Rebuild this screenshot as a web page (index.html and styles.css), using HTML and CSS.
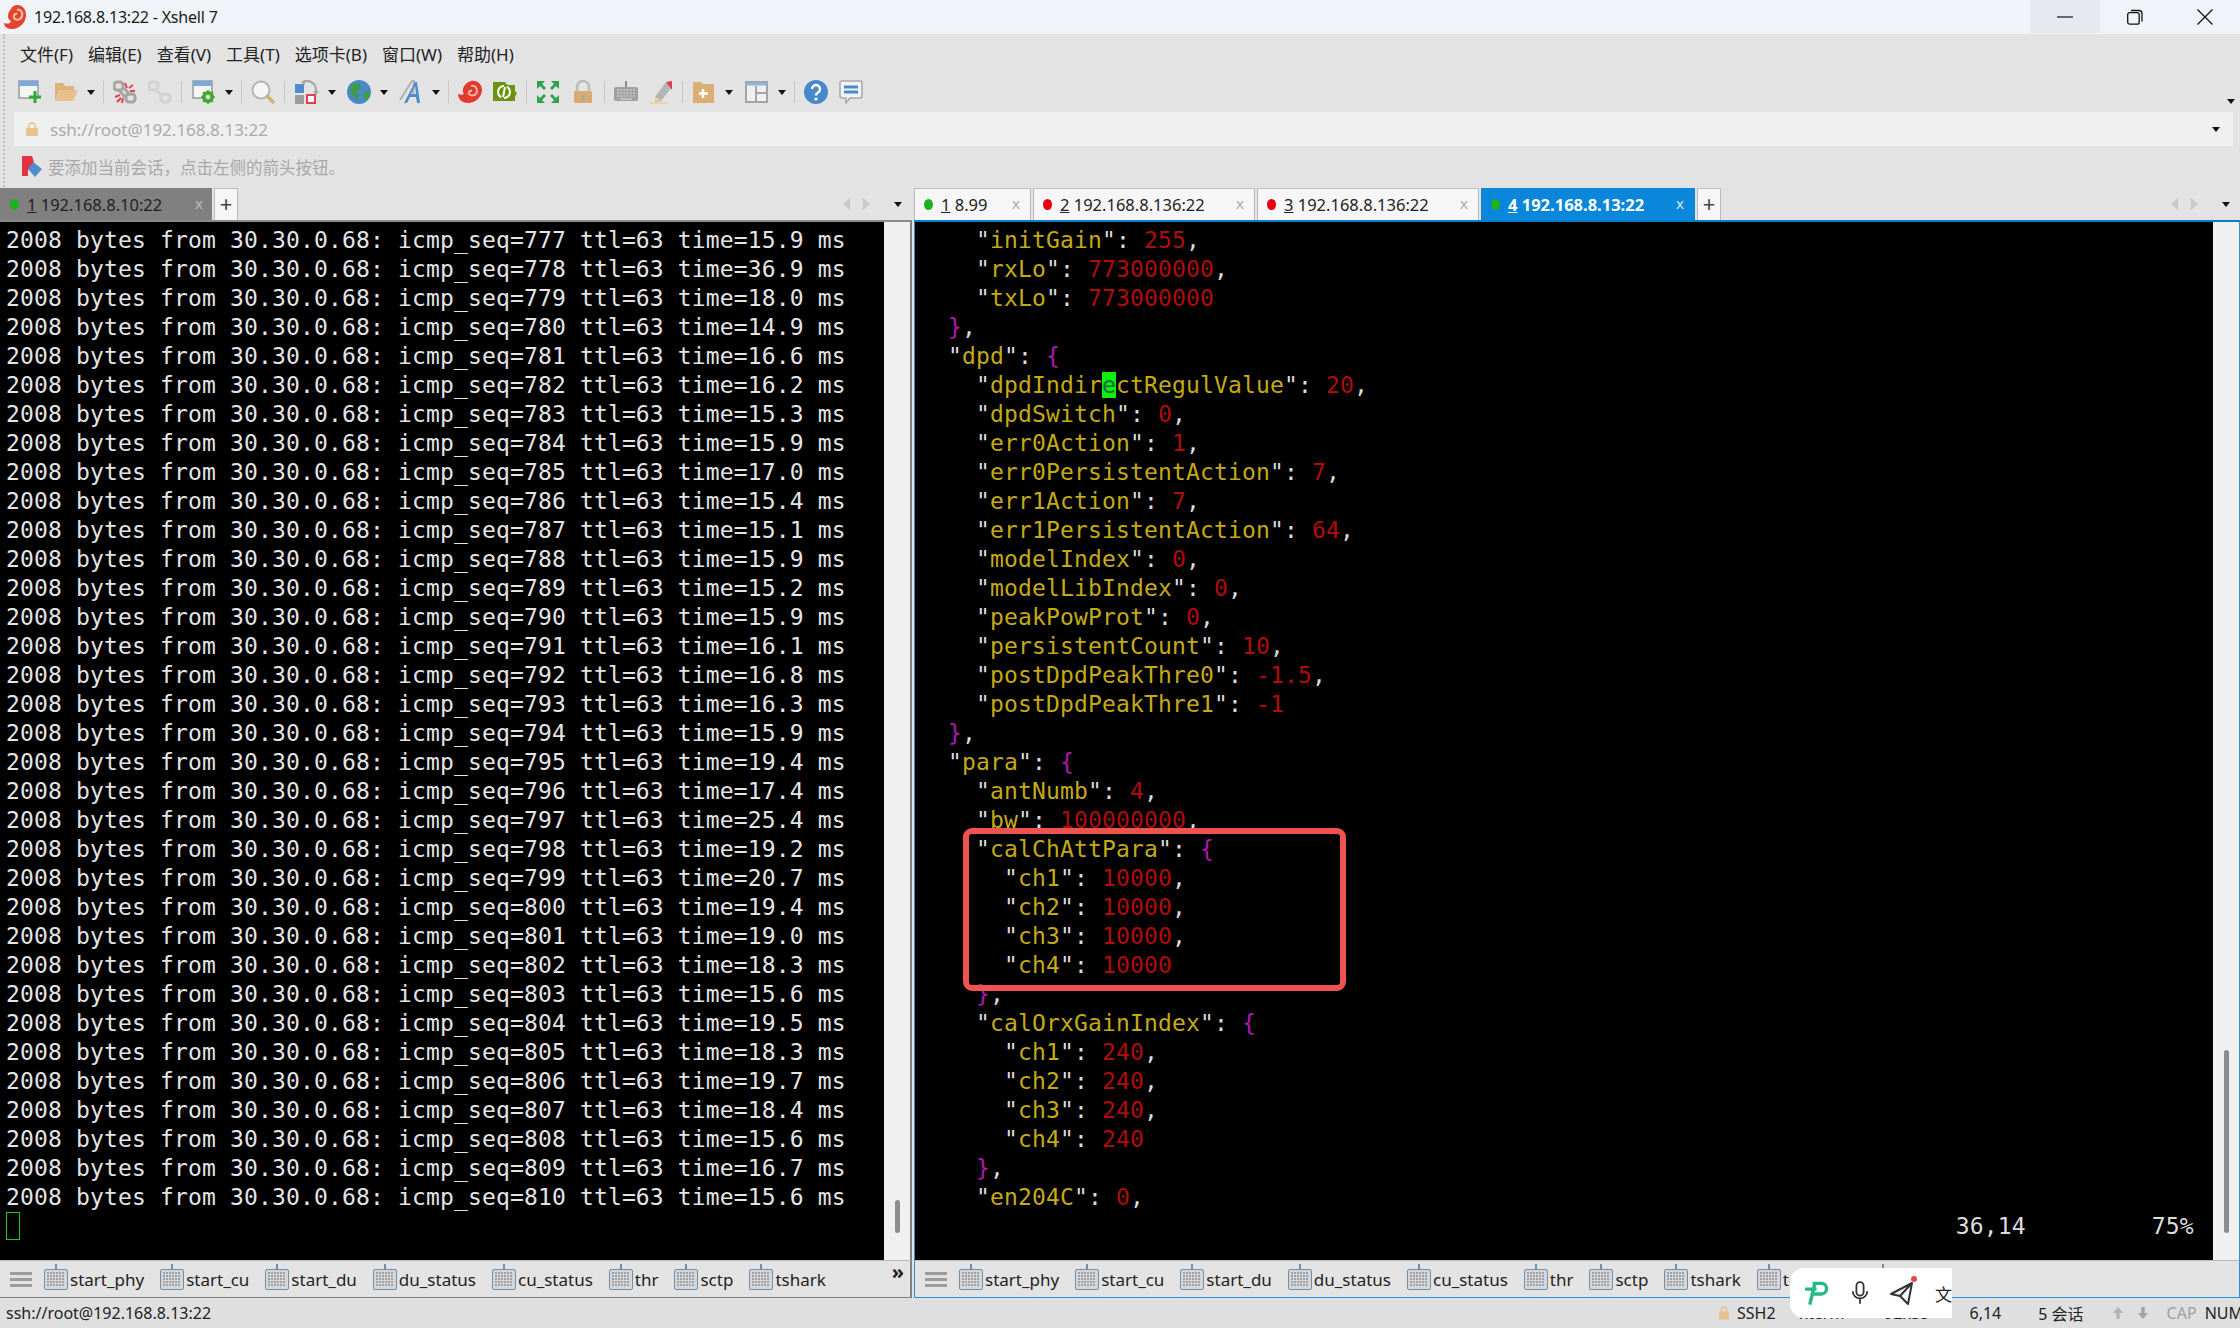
FILE: index.html
```html
<!DOCTYPE html>
<html lang="zh">
<head>
<meta charset="utf-8">
<title>192.168.8.13:22 - Xshell 7</title>
<link rel="stylesheet" href="styles.css">
</head>
<body>
<svg class="defs" aria-hidden="true">
  <symbol id="kb" viewBox="0 0 24 26">
    <path d="M11 0h2v6h-2z" fill="#6f8fb0"/>
    <rect x=".5" y="5.500" width="23" height="20" rx="1.500" fill="#d4d6d8" stroke="#6f8fb0"/>
    <path d="M3 9h18M3 12h18M3 15h18M3 18h18M3 21h18" stroke="#8d8f91" stroke-width="1.500" stroke-dasharray="2 1"/>
  </symbol>
</svg>
<div class="app">
  <header class="titlebar">
    <svg class="logo" viewBox="0 0 24 26"><path d="M14 1c6 0 9 5 9 10 0 8-7 14-14 14-4 0-8-2-8-6 3 1 6 1 7-2-4-1-4-8 0-12 1-3 4-4 6-4z" fill="#e4452f"/><path d="M14 6c4-1 6 3 5 6-1 4-6 5-8 2-1-2 1-5 3-4" fill="none" stroke="#f8c7a8" stroke-width="2"/></svg>
    <span class="title">192.168.8.13:22 - Xshell 7</span>
    <div class="winbtns">
      <span class="winbtn hover"><svg viewBox="0 0 16 16"><path d="M0 8h16" stroke="#111" stroke-width="1.200"/></svg></span>
      <span class="winbtn"><svg viewBox="0 0 16 16"><rect x=".7" y="3.700" width="11.500" height="11.500" rx="2" fill="none" stroke="#111" stroke-width="1.300"/><path d="M4 1.500h8a3 3 0 0 1 3 3v8" fill="none" stroke="#111" stroke-width="1.300"/></svg></span>
      <span class="winbtn"><svg viewBox="0 0 16 16"><path d="M.5.500l15 15M15.500.500l-15 15" stroke="#111" stroke-width="1.300"/></svg></span>
    </div>
  </header>

  <div class="chrome">
    <nav class="menubar">
      <span>文件(F)</span><span>编辑(E)</span><span>查看(V)</span><span>工具(T)</span><span>选项卡(B)</span><span>窗口(W)</span><span>帮助(H)</span>
    </nav>

    <div class="toolbar">
      <svg class="ti" viewBox="0 0 24 24"><rect x="1" y="1" width="19" height="17" fill="#f4f4f4" stroke="#9a9a9a" stroke-width="1.500"/><rect x="1" y="1" width="19" height="5" fill="#7ba9dc"/><path d="M17 11v12M11 17h12" stroke="#2faa3a" stroke-width="3"/></svg>
      <svg class="ti n1" viewBox="0 0 24 24"><path d="M1 3h8l2 3h9v4H5L1 21z" fill="#dcb27a"/><path d="M5 10h19l-5 11H1z" fill="#e8c08a"/></svg>
      <span class="ca"></span><span class="sep"></span>
      <svg class="ti" viewBox="0 0 24 24"><g fill="none" stroke="#a4a4a4" stroke-width="3"><rect x="1" y="2" width="9" height="8" rx="3"/><rect x="13" y="14" width="9" height="8" rx="3"/><path d="M6 10l6 7M11 8l6 7"/></g><path d="M12 3l2 5M20 5l-4 3M22 11h-5M2 17l5-2M4 22l4-4M9 23l1-5" stroke="#e2404a" stroke-width="2"/></svg>
      <svg class="ti" viewBox="0 0 24 24"><g fill="none" stroke="#d2d2d2" stroke-width="3"><rect x="1" y="2" width="9" height="8" rx="3"/><rect x="13" y="14" width="9" height="8" rx="3"/><path d="M7 9l8 8"/></g></svg>
      <span class="sep"></span>
      <svg class="ti n1" viewBox="0 0 24 24"><rect x="1" y="1" width="19" height="17" fill="#f4f4f4" stroke="#9a9a9a" stroke-width="1.500"/><rect x="1" y="1" width="19" height="5" fill="#7ba9dc"/><circle cx="16" cy="17" r="4.500" fill="none" stroke="#3fa52f" stroke-width="3"/><path d="M16 10v14M9 17h14M11 12l10 10M21 12L11 22" stroke="#3fa52f" stroke-width="1.500"/><circle cx="16" cy="17" r="2" fill="#f4f4f4"/></svg>
      <span class="ca"></span><span class="sep"></span>
      <svg class="ti" viewBox="0 0 24 24"><circle cx="10" cy="10" r="8.500" fill="#f5f5f5" stroke="#b4b4b4" stroke-width="2"/><path d="M16 16l7 7" stroke="#d8ae78" stroke-width="3.500"/></svg>
      <span class="sep"></span>
      <svg class="ti n1" viewBox="0 0 24 24"><rect x="0" y="4" width="9" height="9" fill="#4f8bcd"/><rect x="0" y="15" width="9" height="9" fill="#9c9c9c"/><rect x="12" y="15" width="8" height="8" fill="#fff" stroke="#e0404a" stroke-width="2"/><path d="M8 2a9 9 0 0 1 13 9" fill="none" stroke="#a4a4a4" stroke-width="2"/><path d="M18 11h6l-3 4zM10 0v5L6 2z" fill="#a4a4a4"/></svg>
      <span class="ca"></span>
      <svg class="ti" viewBox="0 0 24 24"><circle cx="12" cy="12" r="12" fill="#4a88cc"/><path d="M6 3l7 1 1 5-4 2 2 5-3 5-2-5-4-3 1-6zM16 12l6-1 1 5-5 5-2-3z" fill="#3f9a4a"/></svg>
      <span class="ca"></span>
      <svg class="ti" viewBox="0 0 24 24"><path d="M1 20L13 1h2l-1 15" fill="none" stroke="#b0b0b0" stroke-width="2"/><path d="M5 23h3l3-6h6l1 6h3L18 2h-2zM12 14l4-8 1 8z" fill="#4f8bcd"/></svg>
      <span class="ca"></span><span class="sep"></span>
      <svg class="ti" viewBox="0 0 24 24"><path d="M10 23C4 23 0 19 0 14c3 1 4 1 6 0C3 10 6 3 13 1c6-1 11 3 11 9 0 7-7 13-14 13z" fill="#e5392e"/><path d="M13 6c4-1 6 2 6 5 0 4-5 6-8 3-1-2 1-4 3-3" fill="none" stroke="#f7b7a8" stroke-width="2"/></svg>
      <svg class="ti" viewBox="0 0 24 24"><path d="M0 2h12l2 3h8v6l2 2-2 4v4H0z" fill="#6d9411"/><circle cx="11" cy="12" r="6" fill="none" stroke="#fff" stroke-width="2"/><path d="M13 4L9 20" stroke="#6d9411" stroke-width="3"/><path d="M12 7l-2 10" stroke="#fff" stroke-width="2"/></svg>
      <span class="sep"></span>
      <svg class="ti" viewBox="0 0 24 24"><path d="M1 1h8L6 4l4 4-2 2-4-4-3 3zM23 1v8l-3-3-4 4-2-2 4-4-3-3zM1 23v-8l3 3 4-4 2 2-4 4 3 3zM23 23h-8l3-3-4-4 2-2 4 4 3-3z" fill="#2fa24a"/></svg>
      <svg class="ti" viewBox="0 0 24 24"><path d="M6 11V7a6 6 0 0 1 12 0v4" fill="none" stroke="#bcbcbc" stroke-width="2.500"/><rect x="3" y="11" width="18" height="12" rx="1.500" fill="#d8ac70"/><rect x="10.500" y="14" width="3" height="6" fill="#a8a8a8"/></svg>
      <span class="sep"></span>
      <svg class="ti" viewBox="0 0 24 24"><path d="M11 1h2v6h-2z" fill="#8d8d8d"/><rect x="0" y="7" width="24" height="14" rx="2" fill="#a0a0a0"/><path d="M3 10h18M3 13h18M3 16h18" stroke="#e0e0e0" stroke-dasharray="2 1.200"/><path d="M6 19h12" stroke="#e0e0e0"/></svg>
      <svg class="ti" viewBox="0 0 24 24"><path d="M6 17L17 2l6 5-11 14-6 1z" fill="#b4b4b4"/><path d="M17 2l6-1v9z" fill="#e0404a"/><path d="M6 17l6 3-7 1z" fill="#f2d6a6"/><path d="M1 23h18" stroke="#f0d4a4" stroke-width="2"/></svg>
      <span class="sep"></span>
      <svg class="ti" viewBox="0 0 24 24"><path d="M1 2h8l2 2h11v19H1z" fill="#dbae74"/><path d="M11 9v9M7 13.500h9" stroke="#fff" stroke-width="2.500"/></svg>
      <span class="ca"></span>
      <svg class="ti n1" viewBox="0 0 24 24"><rect x="1" y="2" width="21" height="20" fill="#f0f0f0" stroke="#a4a4a4" stroke-width="2"/><path d="M1 4h21" stroke="#8fb6e0" stroke-width="3"/><path d="M11 6v16M11 13h11" stroke="#a4a4a4" stroke-width="2"/></svg>
      <span class="ca"></span><span class="sep"></span>
      <svg class="ti" viewBox="0 0 24 24"><circle cx="12" cy="12" r="12" fill="#4a88cc"/><path d="M8 9a4 4 0 1 1 6 3.500c-1.500 1-2 1.500-2 3" fill="none" stroke="#fff" stroke-width="2.500"/><circle cx="12" cy="19" r="1.600" fill="#fff"/></svg>
      <svg class="ti" viewBox="0 0 24 24"><path d="M3 1h18a2 2 0 0 1 2 2v13a2 2 0 0 1-2 2H11l-4 5v-5H3a2 2 0 0 1-2-2V3a2 2 0 0 1 2-2z" fill="#f2f2f2" stroke="#a8a8a8" stroke-width="1.500"/><path d="M5 7h14M5 12h14" stroke="#4a88cc" stroke-width="3"/></svg>
      <span class="ca end"></span>
    </div>

    <div class="addrbar">
      <svg class="lock" viewBox="0 0 12 14"><path d="M3 6V4a3 3 0 0 1 6 0v2" fill="none" stroke="#e6c492" stroke-width="1.500"/><rect y="6" width="12" height="8" rx="1" fill="#e6c492"/></svg>
      <span class="addr">ssh://root@192.168.8.13:22</span>
      <span class="ca dark"></span>
    </div>

    <div class="linkbar">
      <svg class="bookmark" viewBox="0 0 20 22"><path d="M0 0h10l2 6-6 8v6l-6-0z" fill="#e0343f"/><path d="M11 6l9 7-7 8-7-8z" fill="#4f8bcd"/></svg>
      <span>要添加当前会话，点击左侧的箭头按钮。</span>
    </div>
  </div>

  <main class="panes">
    <section class="pane left">
      <div class="tabs">
        <div class="tab current-left"><i class="dot green"></i><span class="tabtext"><u>1</u> 192.168.8.10:22</span><em class="x">x</em></div>
        <span class="plus">+</span>
        <span class="nav"><i class="arr l"></i><i class="arr r"></i><i class="ca dark"></i></span>
      </div>
      <div class="body">
<pre class="term">2008 bytes from 30.30.0.68: icmp_seq=777 ttl=63 time=15.9 ms
2008 bytes from 30.30.0.68: icmp_seq=778 ttl=63 time=36.9 ms
2008 bytes from 30.30.0.68: icmp_seq=779 ttl=63 time=18.0 ms
2008 bytes from 30.30.0.68: icmp_seq=780 ttl=63 time=14.9 ms
2008 bytes from 30.30.0.68: icmp_seq=781 ttl=63 time=16.6 ms
2008 bytes from 30.30.0.68: icmp_seq=782 ttl=63 time=16.2 ms
2008 bytes from 30.30.0.68: icmp_seq=783 ttl=63 time=15.3 ms
2008 bytes from 30.30.0.68: icmp_seq=784 ttl=63 time=15.9 ms
2008 bytes from 30.30.0.68: icmp_seq=785 ttl=63 time=17.0 ms
2008 bytes from 30.30.0.68: icmp_seq=786 ttl=63 time=15.4 ms
2008 bytes from 30.30.0.68: icmp_seq=787 ttl=63 time=15.1 ms
2008 bytes from 30.30.0.68: icmp_seq=788 ttl=63 time=15.9 ms
2008 bytes from 30.30.0.68: icmp_seq=789 ttl=63 time=15.2 ms
2008 bytes from 30.30.0.68: icmp_seq=790 ttl=63 time=15.9 ms
2008 bytes from 30.30.0.68: icmp_seq=791 ttl=63 time=16.1 ms
2008 bytes from 30.30.0.68: icmp_seq=792 ttl=63 time=16.8 ms
2008 bytes from 30.30.0.68: icmp_seq=793 ttl=63 time=16.3 ms
2008 bytes from 30.30.0.68: icmp_seq=794 ttl=63 time=15.9 ms
2008 bytes from 30.30.0.68: icmp_seq=795 ttl=63 time=19.4 ms
2008 bytes from 30.30.0.68: icmp_seq=796 ttl=63 time=17.4 ms
2008 bytes from 30.30.0.68: icmp_seq=797 ttl=63 time=25.4 ms
2008 bytes from 30.30.0.68: icmp_seq=798 ttl=63 time=19.2 ms
2008 bytes from 30.30.0.68: icmp_seq=799 ttl=63 time=20.7 ms
2008 bytes from 30.30.0.68: icmp_seq=800 ttl=63 time=19.4 ms
2008 bytes from 30.30.0.68: icmp_seq=801 ttl=63 time=19.0 ms
2008 bytes from 30.30.0.68: icmp_seq=802 ttl=63 time=18.3 ms
2008 bytes from 30.30.0.68: icmp_seq=803 ttl=63 time=15.6 ms
2008 bytes from 30.30.0.68: icmp_seq=804 ttl=63 time=19.5 ms
2008 bytes from 30.30.0.68: icmp_seq=805 ttl=63 time=18.3 ms
2008 bytes from 30.30.0.68: icmp_seq=806 ttl=63 time=19.7 ms
2008 bytes from 30.30.0.68: icmp_seq=807 ttl=63 time=18.4 ms
2008 bytes from 30.30.0.68: icmp_seq=808 ttl=63 time=15.6 ms
2008 bytes from 30.30.0.68: icmp_seq=809 ttl=63 time=16.7 ms
2008 bytes from 30.30.0.68: icmp_seq=810 ttl=63 time=15.6 ms
<span class="hollow"> </span></pre>
        <div class="scroll"><i class="thumb"></i></div>
      </div>
      <div class="bm">
        <i class="burger"></i>
        <span class="bi"><svg><use href="#kb"/></svg>start_phy</span>
        <span class="bi"><svg><use href="#kb"/></svg>start_cu</span>
        <span class="bi"><svg><use href="#kb"/></svg>start_du</span>
        <span class="bi"><svg><use href="#kb"/></svg>du_status</span>
        <span class="bi"><svg><use href="#kb"/></svg>cu_status</span>
        <span class="bi"><svg><use href="#kb"/></svg>thr</span>
        <span class="bi"><svg><use href="#kb"/></svg>sctp</span>
        <span class="bi"><svg><use href="#kb"/></svg>tshark</span>
        <b class="more">»</b>
      </div>
    </section>

    <section class="pane right">
      <div class="tabs">
        <div class="tab t1"><i class="dot green"></i><span class="tabtext"><u>1</u> 8.99</span><em class="x">x</em></div>
        <div class="tab t2"><i class="dot red"></i><span class="tabtext"><u>2</u> 192.168.8.136:22</span><em class="x">x</em></div>
        <div class="tab t2"><i class="dot red"></i><span class="tabtext"><u>3</u> 192.168.8.136:22</span><em class="x">x</em></div>
        <div class="tab t4 active"><i class="dot green"></i><span class="tabtext"><u>4</u> 192.168.8.13:22</span><em class="x">x</em></div>
        <span class="plus">+</span>
        <span class="nav"><i class="arr l"></i><i class="arr r"></i><i class="ca dark"></i></span>
      </div>
      <div class="body">
<pre class="term">    "<span class="k">initGain</span>": <span class="n">255</span>,
    "<span class="k">rxLo</span>": <span class="n">773000000</span>,
    "<span class="k">txLo</span>": <span class="n">773000000</span>
  <span class="b">}</span>,
  "<span class="k">dpd</span>": <span class="b">{</span>
    "<span class="k">dpdIndir</span><span class="cur">e</span><span class="k">ctRegulValue</span>": <span class="n">20</span>,
    "<span class="k">dpdSwitch</span>": <span class="n">0</span>,
    "<span class="k">err0Action</span>": <span class="n">1</span>,
    "<span class="k">err0PersistentAction</span>": <span class="n">7</span>,
    "<span class="k">err1Action</span>": <span class="n">7</span>,
    "<span class="k">err1PersistentAction</span>": <span class="n">64</span>,
    "<span class="k">modelIndex</span>": <span class="n">0</span>,
    "<span class="k">modelLibIndex</span>": <span class="n">0</span>,
    "<span class="k">peakPowProt</span>": <span class="n">0</span>,
    "<span class="k">persistentCount</span>": <span class="n">10</span>,
    "<span class="k">postDpdPeakThre0</span>": <span class="n">-1.5</span>,
    "<span class="k">postDpdPeakThre1</span>": <span class="n">-1</span>
  <span class="b">}</span>,
  "<span class="k">para</span>": <span class="b">{</span>
    "<span class="k">antNumb</span>": <span class="n">4</span>,
    "<span class="k">bw</span>": <span class="n">100000000</span>,
    "<span class="k">calChAttPara</span>": <span class="b">{</span>
      "<span class="k">ch1</span>": <span class="n">10000</span>,
      "<span class="k">ch2</span>": <span class="n">10000</span>,
      "<span class="k">ch3</span>": <span class="n">10000</span>,
      "<span class="k">ch4</span>": <span class="n">10000</span>
    <span class="b">}</span>,
    "<span class="k">calOrxGainIndex</span>": <span class="b">{</span>
      "<span class="k">ch1</span>": <span class="n">240</span>,
      "<span class="k">ch2</span>": <span class="n">240</span>,
      "<span class="k">ch3</span>": <span class="n">240</span>,
      "<span class="k">ch4</span>": <span class="n">240</span>
    <span class="b">}</span>,
    "<span class="k">en204C</span>": <span class="n">0</span>,
                                                                          36,14         75%</pre>
        <div class="redbox"></div>
        <div class="scroll"><i class="thumb tall"></i></div>
      </div>
      <div class="bm">
        <i class="burger"></i>
        <span class="bi"><svg><use href="#kb"/></svg>start_phy</span>
        <span class="bi"><svg><use href="#kb"/></svg>start_cu</span>
        <span class="bi"><svg><use href="#kb"/></svg>start_du</span>
        <span class="bi"><svg><use href="#kb"/></svg>du_status</span>
        <span class="bi"><svg><use href="#kb"/></svg>cu_status</span>
        <span class="bi"><svg><use href="#kb"/></svg>thr</span>
        <span class="bi"><svg><use href="#kb"/></svg>sctp</span>
        <span class="bi"><svg><use href="#kb"/></svg>tshark</span>
        <span class="bi"><svg><use href="#kb"/></svg>tcpdump</span>
        <span class="bi"><svg><use href="#kb"/></svg>nr抓包</span>
      </div>
    </section>
  </main>

  <footer class="status">
    <span class="s-path">ssh://root@192.168.8.13:22</span>
    <svg class="s-lock" viewBox="0 0 12 16"><path d="M3 6V4a3 3 0 0 1 6 0v2" fill="none" stroke="#e6c492" stroke-width="2"/><rect y="6" width="12" height="10" rx="1" fill="#e6c492"/></svg>
    <span class="s-ssh">SSH2</span>
    <span class="s-term">xterm</span>
    <span class="s-size">92x35</span>
    <span class="s-pos">6,14</span>
    <span class="s-sess">5 会话</span>
    <svg class="s-arrow" viewBox="0 0 14 14"><path d="M7 0l6 7H9v7H5V7H1z" fill="#b4b4b4"/></svg>
    <svg class="s-arrow" viewBox="0 0 14 14"><path d="M7 14l6-7H9V0H5v7H1z" fill="#a4a4a4"/></svg>
    <span class="s-cap">CAP</span>
    <span class="s-num">NUM</span>
  </footer>

  <aside class="imebar">
    <svg viewBox="0 0 26 26" class="ime-p"><path d="M9 3h9a5 5 0 0 1 0 11H8" fill="none" stroke="#22bb86" stroke-width="3.500"/><path d="M11 4L6 25M1 9h12" stroke="#22bb86" stroke-width="3.500" fill="none"/></svg>
    <svg viewBox="0 0 20 26" class="ime-i"><rect x="6" y="1" width="8" height="15" rx="4" fill="none" stroke="#333" stroke-width="2"/><path d="M2 11a8 8 0 0 0 16 0M10 19v6" fill="none" stroke="#333" stroke-width="2"/></svg>
    <span class="ime-send"><svg viewBox="0 0 26 26" class="ime-i2"><path d="M2 14L23 3l-4 21-8-8zM11 16l12-13" fill="none" stroke="#333" stroke-width="2" stroke-linejoin="round"/></svg><i class="ime-dot"></i></span>
    <span class="ime-tr">文A</span>
  </aside>
</div>
</body>
</html>
```
FILE: styles.css
```css
* { box-sizing: border-box; }
html, body { margin: 0; padding: 0; background: #e3e3e3; }
body { font-family: "Noto Sans", "Noto Sans CJK SC", sans-serif; overflow: hidden; }
.defs { position: absolute; width: 0; height: 0; }
i, em, u { font-style: normal; }
.app { position: relative; width: 2240px; height: 1328px; display: flex; flex-direction: column; overflow: hidden; }

/* title bar */
.titlebar { height: 34px; background: #f0f4f8; display: flex; align-items: center; padding-left: 3px; flex: none; }
.logo { width: 24px; height: 26px; margin-right: 7px; }
.title { font-size: 16px; color: #1a1a1a; letter-spacing: -.2px; }
.winbtns { margin-left: auto; display: flex; height: 33px; align-self: flex-start; }
.winbtn { width: 70px; display: flex; align-items: center; justify-content: center; }
.winbtn svg { width: 16px; height: 16px; }
.winbtn.hover { background: #e6eaee; }

/* chrome */
.chrome { flex: none; height: 153px; display: flex; flex-direction: column; background: #e3e3e3; position: relative; }
.chrome::before { content: ""; position: absolute; left: 3px; top: 0; bottom: 0; border-left: 2px dotted #bdbdbd; }
.menubar { height: 38px; display: flex; align-items: center; padding-left: 20px; gap: 15px; font-size: 17px; color: #222; flex: none; }
.toolbar { height: 40px; display: flex; align-items: center; padding-left: 18px; flex: none; }
.ti { width: 24px; height: 24px; margin-right: 9px; flex: none; }
.ti + .ti { margin-left: 2px; }
.ca + .ti { margin-left: 3px; }
.ti.n1 { margin-left: 3px; }
.sep + .ti.n1 { margin-left: 1px; }
.ca + .ti.n1 { margin-left: 4px; }
.ca { width: 0; height: 0; border-left: 4.500px solid transparent; border-right: 4.500px solid transparent; border-top: 5px solid #111; margin-right: 8px; flex: none; display: block; }
.sep { width: 1px; height: 22px; background: #c6c6c6; margin-right: 9px; flex: none; }
.ca.end { margin-left: auto; margin-right: 5px; align-self: flex-end; margin-bottom: 8px; }
.addrbar { height: 34px; margin: 0 7px 0 14px; background: #efefef; display: flex; align-items: center; padding-left: 12px; flex: none; }
.lock { width: 12px; height: 14px; margin-right: 12px; }
.addr { font-size: 17px; color: #aaa; }
.ca.dark { margin: 0 13px 0 auto; }
.linkbar { height: 41px; display: flex; align-items: center; padding-left: 22px; font-size: 16.500px; color: #a8a8a8; flex: none; }
.bookmark { width: 20px; height: 22px; margin-right: 6px; }

/* panes */
.panes { flex: none; height: 1111px; display: flex; gap: 2px; }
.pane { display: flex; flex-direction: column; position: relative; }
.pane.left { width: 912px; }
.pane.right { width: 1326px; }
.tabs { height: 33px; flex: none; display: flex; align-items: stretch; padding-top: 1px; }
.tab { display: flex; align-items: center; height: 32px; font-size: 16.500px; color: #222; background: #f6f6f6; border: 1px solid #bcbcbc; border-bottom: 0; margin-right: 2px; position: relative; flex: none; }
.tabtext { white-space: pre; }
.dot { width: 9px; height: 11px; border-radius: 50%; margin: 0 8px 0 9px; flex: none; }
.dot.green { background: #1db31d; }
.dot.red { background: #e6000f; }
.x { margin-left: auto; margin-right: 10px; color: #a6a6a6; font-size: 15px; line-height: 1; position: relative; top: -1px; }
.current-left { width: 212px; background: #808080; border-color: #808080; }
.current-left .x { color: #bcbcbc; margin-right: 8px; }
.t1 { width: 117px; }
.t2 { width: 222px; }
.t4 { width: 214px; }
.active { background: #0a86da; border-color: #0a86da; color: #fff; font-weight: 700; margin-right: 2px; }
.active .x { color: #d8ecfa; font-weight: 400; }
.plus { width: 24px; background: #f6f6f6; border: 1px solid #bcbcbc; border-bottom: 0; text-align: center; font-size: 22px; line-height: 28px; color: #444; flex: none; }
.nav { margin-left: auto; display: flex; align-items: center; flex: none; }
.arr { width: 0; height: 0; border-top: 6px solid transparent; border-bottom: 6px solid transparent; margin-right: 13px; }
.arr.l { border-right: 7px solid #c8c8c8; }
.arr.r { border-left: 7px solid #c8c8c8; margin-right: 24px; }
.nav .ca.dark { margin: 0 10px 0 0; }

.body { flex: 1; display: flex; min-height: 0; position: relative; background: #000; border-top: 2px solid #8a8a8a; }
.right .body { border-top-color: #0a7ccc; border-left: 1px solid #2d8fd0; border-right: 1px solid #2d8fd0; }
.left .body { border-right: 2px solid #808080; }
.term { flex: 1; margin: 0; padding: 4px 0 0 6px; font-family: "DejaVu Sans Mono", monospace; font-size: 23px; line-height: 29px; letter-spacing: .15px; color: #e4e4e4; overflow: hidden; }
.right .term { padding-left: 5px; color: #dcdcdc; }
.k { color: #c4aa14; }
.n { color: #b00c0c; }
.b { color: #b018b0; }
.cur { background: #0cf00c; color: #0a6a4a; }
.hollow { display: inline-block; width: 14px; height: 28px; border: 1px solid #22c622; vertical-align: top; }
.scroll { width: 26px; background: #f0f0f0; display: flex; flex-direction: column; align-items: center; flex: none; }
.thumb { width: 5px; height: 33px; background: #8c8c8c; border-radius: 3px; margin-top: auto; margin-bottom: 27px; }
.thumb.tall { height: 183px; }
.redbox { position: absolute; left: 48px; top: 606px; width: 383px; height: 163px; border: 6px solid #ef5350; border-radius: 9px; }

/* bookmarks */
.bm { height: 38px; flex: none; display: flex; align-items: center; background: #e3e3e3; padding-left: 10px; font-size: 17px; color: #222; position: relative; border-bottom: 1px solid #808080; }
.left .bm { border-right: 2px solid #808080; border-top: 1px solid #bbb; }
.right .bm { border: 1px solid #2d8fd0; border-top: 1px solid #bbb; }
.burger { width: 22px; height: 15px; margin-right: 12px; border-top: 3px solid #9c9c9c; border-bottom: 3px solid #9c9c9c; position: relative; flex: none; }
.burger::after { content: ""; position: absolute; left: 0; right: 0; top: 3px; height: 3px; background: #9c9c9c; }
.bi { display: flex; align-items: center; margin-right: 16px; flex: none; white-space: nowrap; }
.bi svg { width: 24px; height: 26px; margin-right: 2px; position: relative; top: -2px; }
.more { position: absolute; right: 6px; top: -3px; font-size: 20px; color: #222; }

/* status */
.status { flex: 1; background: #dfdfdf; display: flex; align-items: center; font-size: 16px; color: #222; padding-left: 6px; }
.s-lock { width: 10px; height: 14px; margin-left: auto; margin-right: 8px; }
.s-ssh { margin-right: 24px; }
.s-term { margin-right: 40px; }
.s-size { margin-right: 40px; }
.s-pos { margin-right: 37px; }
.s-sess { margin-right: 28px; }
.s-arrow { width: 12px; height: 14px; margin-right: 13px; }
.s-cap { color: #a0a0a0; margin-left: 5px; margin-right: 8px; }
.s-num { margin-right: -3px; }

/* floating input method bar */
.imebar { position: absolute; left: 1790px; top: 1268px; width: 162px; height: 50px; background: #fff; border-radius: 14px 0 0 14px; display: flex; align-items: center; padding-left: 14px; overflow: hidden; }
.ime-p { width: 25px; height: 26px; margin-right: 22px; flex: none; }
.ime-i { width: 18px; height: 24px; margin-right: 20px; flex: none; }
.ime-send { position: relative; width: 26px; height: 26px; margin-right: 20px; flex: none; }
.ime-i2 { width: 26px; height: 26px; }
.ime-dot { position: absolute; right: -2px; top: -4px; width: 6px; height: 6px; border-radius: 50%; background: #ef4444; }
.ime-tr { font-size: 17px; color: #222; white-space: nowrap; flex: none; }
```
